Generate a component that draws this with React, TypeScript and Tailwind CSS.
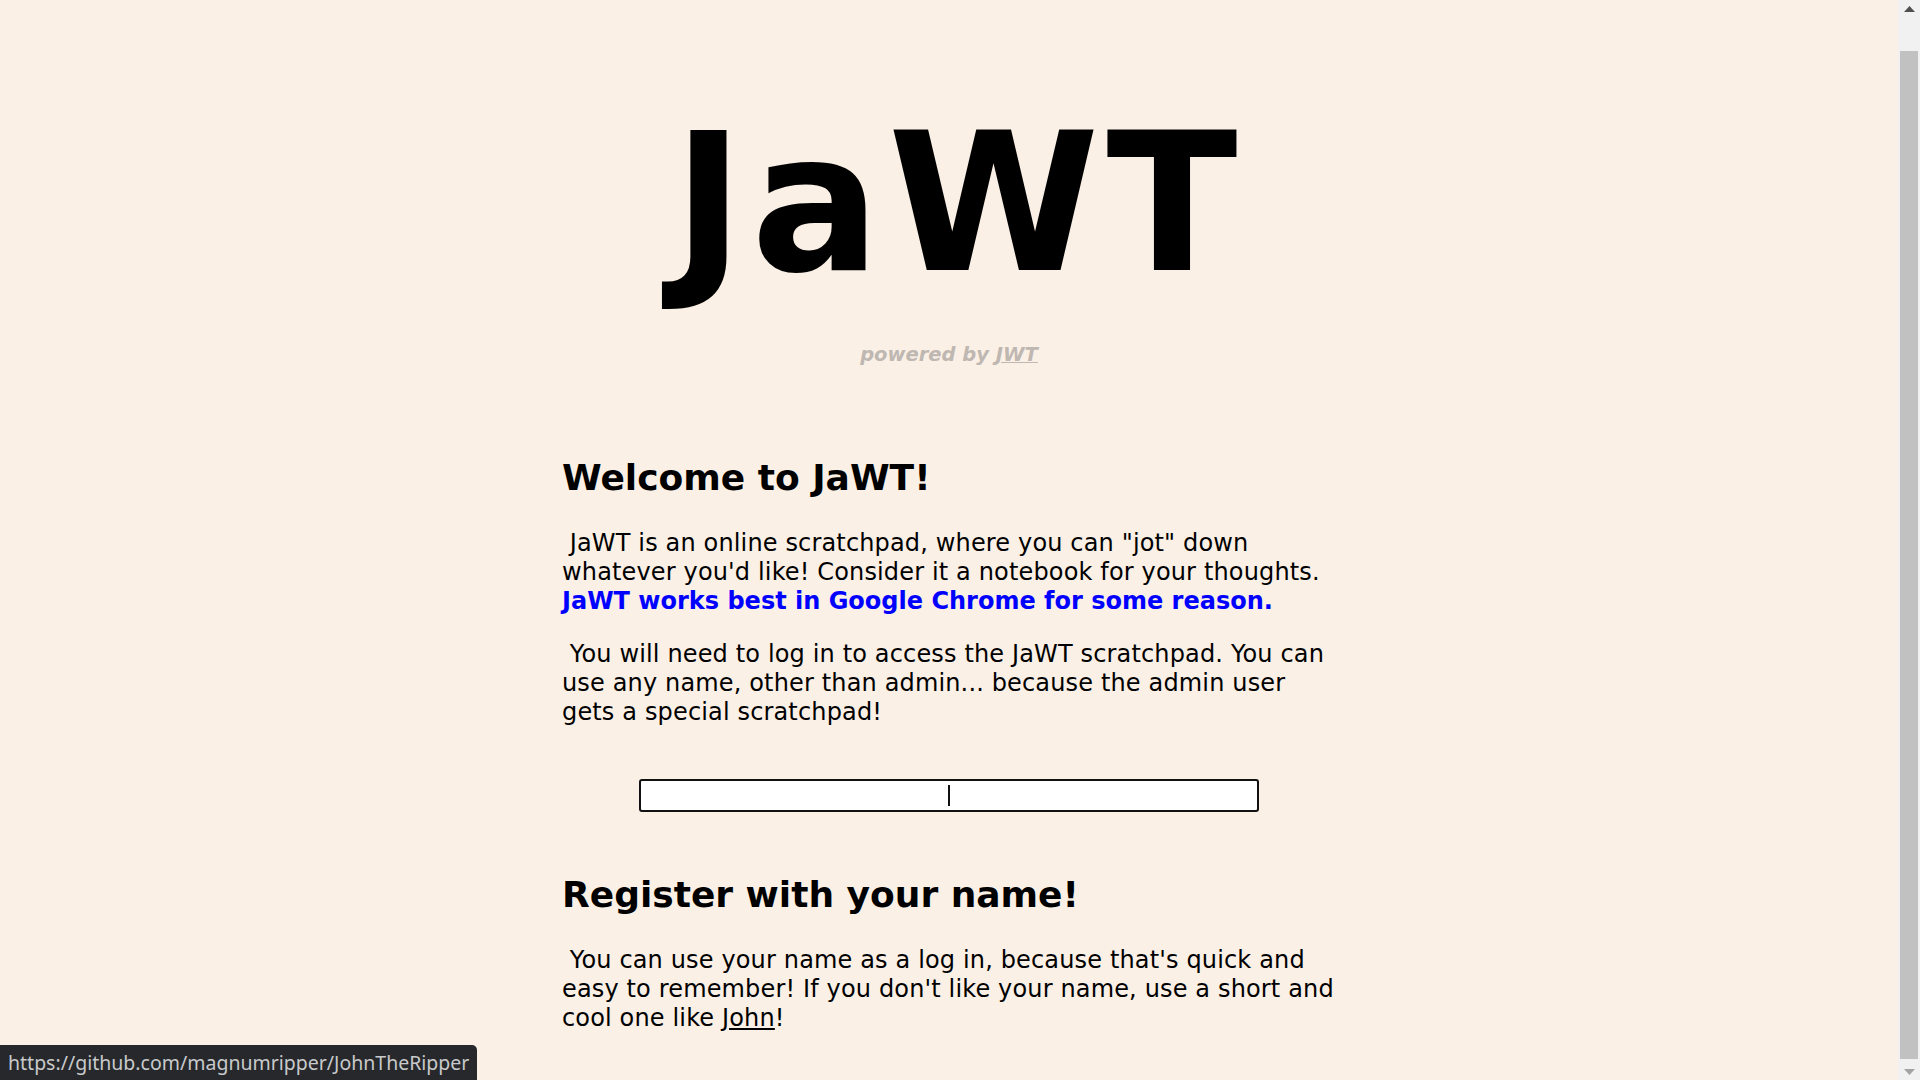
export default function App() {
  return (
    <div className="flex h-screen w-full overflow-hidden bg-[#faf0e6]">
      {/* page */}
      <main className="relative flex-1 overflow-hidden font-['DejaVu_Sans',Verdana,sans-serif] text-black">
        <div className="pt-[92px]">
          <h1 className="pl-[19px] text-center text-[192px] font-bold leading-[224px] tracking-[7px]">JaWT</h1>
          <p className="mt-[27px] text-center text-[19.5px] font-bold italic leading-[23px] text-[#bfb7b1]">
            powered by <a className="underline" href="#">JWT</a>
          </p>

          <div className="mx-auto mt-[91px] w-[774px] tracking-[0.15px]">
            <h2 className="text-[36px] font-bold leading-[42px] tracking-normal">Welcome to JaWT!</h2>
            <p className="mt-[30px] text-[24px] leading-[29px]">
              {'\u00a0'}JaWT is an online scratchpad, where you can "jot" down whatever you'd like! Consider it a notebook for your thoughts.{' '}
              <b className="tracking-normal text-[#0000ff]">JaWT works best in Google Chrome for some reason.</b>
            </p>
            <p className="mt-[24px] text-[24px] leading-[29px]">
              {'\u00a0'}You will need to log in to access the JaWT scratchpad. You can use any name, other than admin... because the admin user gets a special scratchpad!
            </p>

            {/* login box */}
            <div className="mt-[52px] flex justify-center">
              <div className="relative">
                <input
                  type="text"
                  className="block h-[33px] w-[620px] rounded-[3px] border-2 border-[#111] bg-white text-center text-[18px] outline-none"
                />
                <span className="pointer-events-none absolute left-[309px] top-[6px] h-[21px] w-[2px] bg-[#111]" />
              </div>
            </div>

            <h2 className="mt-[62px] text-[36px] font-bold leading-[42px] tracking-normal">Register with your name!</h2>
            <p className="mt-[30px] text-[24px] leading-[29px]">
              {'\u00a0'}You can use your name as a log in, because that's quick and easy to remember! If you don't like your name, use a short and cool one like{' '}
              <a className="underline" href="#">John</a>!
            </p>
          </div>
        </div>

        {/* link status bubble */}
        <div className="absolute bottom-0 left-0 flex h-[35px] items-center rounded-tr-[5px] bg-[#26282c] px-[8px] font-['Noto_Sans',sans-serif] text-[19.5px] text-[#c8cacb]">
          https://github.com/magnumripper/JohnTheRipper
        </div>
      </main>

      {/* scrollbar */}
      <div className="flex w-[22px] flex-col bg-[#f1f1f1]">
        <div className="flex h-[17px] items-center justify-center">
          <svg width="11" height="6" viewBox="0 0 11 6">
            <path d="M5.5 0 L11 6 L0 6 Z" fill="#505050" />
          </svg>
        </div>
        <div className="flex-1 px-[2px] pb-[4px] pt-[34px]">
          <div className="h-full w-full bg-[#c1c1c1]" />
        </div>
        <div className="flex h-[17px] items-center justify-center">
          <svg width="11" height="6" viewBox="0 0 11 6">
            <path d="M0 0 L11 0 L5.5 6 Z" fill="#a3a3a3" />
          </svg>
        </div>
      </div>
    </div>
  )
}
